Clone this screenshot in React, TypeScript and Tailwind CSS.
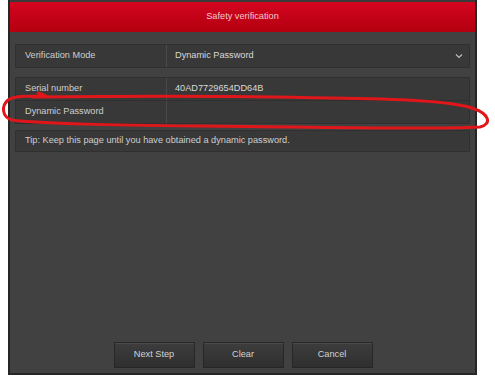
import React from "react";

const font = { fontFamily: '"Liberation Sans", Arial, sans-serif' };

function Row({ label, value, chevron }: { label: string; value?: string; chevron?: boolean }) {
  return (
    <div className="flex h-[22px] items-stretch">
      <div className="w-[151px] flex items-center pl-[9px] text-[9.2px] text-[#cfcfcf] border-r border-[#4a4a4a]">
        {label}
      </div>
      <div className="flex-1 flex items-center pl-[8px] pr-[6px] text-[9.2px] text-[#d8d8d8] justify-between">
        <span>{value}</span>
        {chevron && (
          <svg width="8" height="6" viewBox="0 0 8 6">
            <path d="M1 1.5 L4 4.5 L7 1.5" stroke="#bdbdbd" strokeWidth="1.2" fill="none" />
          </svg>
        )}
      </div>
    </div>
  );
}

export default function App() {
  return (
    <div className="relative w-[495px] h-[377px] bg-white overflow-hidden" style={font}>
      <div className="ml-[8px] w-[469px] h-[375px] flex flex-col border-x-2 border-b-2 border-[#262626] bg-[#414141]">
        <div className="h-[32px] border-t-2 border-[#3a3a3a] bg-gradient-to-b from-[#d4061f] to-[#b3000f] flex items-center justify-center text-[9.2px] text-[#f3c8cc]">
          Safety verification
        </div>
        <div className="flex-1 flex flex-col px-[5px] pt-[12px]">
          <div className="bg-[#383838] border border-[#303030] rounded-[1px]">
            <Row label="Verification Mode" value="Dynamic Password" chevron />
          </div>
          <div className="mt-[9px] bg-[#383838] border border-[#303030] rounded-[1px] flex flex-col">
            <Row label="Serial number" value="40AD7729654DD64B" />
            <div className="h-px bg-[#303030]" />
            <Row label="Dynamic Password" />
          </div>
          <div className="mt-[6px] h-[22px] bg-[#383838] border border-[#303030] rounded-[1px] flex items-center pl-[9px] text-[9.2px] text-[#cfcfcf]">
            Tip: Keep this page until you have obtained a dynamic password.
          </div>
          <div className="flex-1" />
          <div className="flex justify-center gap-[8px] pb-[5px] pl-[1px]">
            {["Next Step", "Clear", "Cancel"].map((t) => (
              <div
                key={t}
                className="w-[81px] h-[26px] flex items-center justify-center text-[9.2px] text-[#d2d2d2] bg-gradient-to-b from-[#3d3d3d] to-[#2f2f2f] border border-[#272727] shadow-[inset_0_1px_0_#4a4a4a]"
              >
                {t}
              </div>
            ))}
          </div>
        </div>
      </div>
      <svg className="absolute left-0 top-0 pointer-events-none" width="495" height="377">
        <path
          d="M38 93 L44 95 M32 97 C120 96 250 96 330 98 C400 99 450 101 472 108 C490 114 492 124 480 127 C420 130 330 127 200 126 C120 125 40 124 12 120 C2 117 1 106 8 100 C14 96 24 96 46 96"
          stroke="#e0161b"
          strokeWidth="3"
          fill="none"
          strokeLinecap="round"
        />
      </svg>
    </div>
  );
}
